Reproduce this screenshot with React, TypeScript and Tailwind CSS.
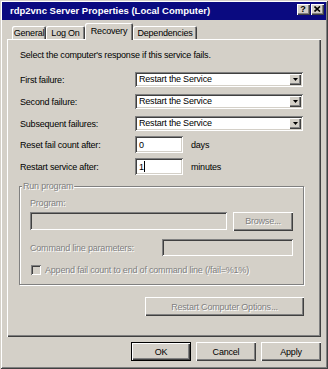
import React from "react";

const raised =
  "shadow-[inset_1px_1px_0_#ffffff,inset_-1px_-1px_0_#404040,inset_-2px_-2px_0_#808080]";
const sunken =
  "shadow-[inset_1px_1px_0_#808080,inset_-1px_-1px_0_#ffffff,inset_2px_2px_0_#404040,inset_-2px_-2px_0_#d4d0c8]";
const disabledText = "text-[#808080] [text-shadow:1px_1px_0_#ffffff]";

function Combo() {
  return (
    <div className={`h-[15px] w-[168px] bg-white ${sunken} flex items-center pl-[4px] pr-[2px]`}>
      <span className="flex-1 leading-[11px]">Restart the Service</span>
      <div className={`w-[12px] h-[11px] bg-[#d4d0c8] ${raised} flex items-center justify-center`}>
        <svg width="5" height="3" viewBox="0 0 5 3">
          <path d="M0 0h5L2.5 3z" fill="#000" />
        </svg>
      </div>
    </div>
  );
}

function Tab({ label, w, selected }: { label: string; w: string; selected?: boolean }) {
  return selected ? (
    <div
      className={`${w} h-[17px] -mb-[1px] relative z-10 bg-[#d4d0c8] rounded-t-[2px] shadow-[inset_1px_1px_0_#ffffff,inset_-1px_0_0_#404040,inset_-2px_0_0_#808080] flex items-center justify-center pb-[1px]`}
    >
      {label}
    </div>
  ) : (
    <div
      className={`${w} h-[13px] bg-[#d4d0c8] rounded-t-[2px] shadow-[inset_1px_1px_0_#ffffff,inset_-1px_0_0_#404040,inset_-2px_0_0_#808080] flex items-center justify-center`}
    >
      {label}
    </div>
  );
}

function Btn({ label, def, disabled, w }: { label: string; def?: boolean; disabled?: boolean; w: string }) {
  if (def) {
    return (
      <div className={`${w} h-[19px] border border-black`}>
        <div className={`w-full h-full ${raised} flex items-center justify-center`}>{label}</div>
      </div>
    );
  }
  return (
    <div className={`${w} h-[19px] ${raised} flex items-center justify-center ${disabled ? disabledText : ""}`}>
      {label}
    </div>
  );
}

export default function App() {
  return (
    <div className="w-[328px] h-[369px] bg-[#d4d0c8] p-[2px] flex flex-col shadow-[inset_1px_1px_0_#d4d0c8,inset_-1px_-1px_0_#404040,inset_2px_2px_0_#ffffff,inset_-2px_-2px_0_#808080] font-['Liberation_Sans',Arial,sans-serif] text-[9px] tracking-[-0.2px] text-black leading-[12px] select-none">
      {/* Title bar */}
      <div className="h-[18px] bg-[#0a0a80] flex items-start pl-[8px] pr-[2px]">
        <div className="flex-1 h-[18px] flex items-center text-white font-bold text-[9.5px] tracking-normal">
          rdp2vnc Server Properties (Local Computer)
        </div>
        <div className="flex gap-[1px] mt-[2px]">
          <div className={`w-[13px] h-[11px] bg-[#d4d0c8] ${raised} flex items-center justify-center font-bold text-[9px] leading-[9px] pr-[1px]`}>
            ?
          </div>
          <div className={`w-[13px] h-[11px] bg-[#d4d0c8] ${raised} flex items-center justify-center pr-[1px] pb-[1px]`}>
            <svg width="7" height="6" viewBox="0 0 7 6">
              <path d="M0.5 0.5L6 5.5M6 0.5L0.5 5.5" stroke="#000" strokeWidth="1.6" />
            </svg>
          </div>
        </div>
      </div>

      {/* Tabs + panel */}
      <div className="px-[5px] flex flex-col">
        <div className="h-[19px] flex items-end pl-[5px]">
          <Tab label="General" w="w-[34px]" />
          <Tab label="Log On" w="w-[39px]" />
          <Tab label="Recovery" w="w-[48px]" selected />
          <Tab label="Dependencies" w="w-[64px]" />
        </div>
        <div className={`h-[298px] ${raised} pl-[12px] pt-[10px] flex flex-col`}>
          <div className="pl-[1px] h-[12px]">Select the computer's response if this service fails.</div>

          <div className="mt-[11px] flex flex-col gap-[7px]">
            <div className="flex items-center h-[15px]">
              <div className="w-[116px] pl-[1px]">First failure:</div>
              <Combo />
            </div>
            <div className="flex items-center h-[15px]">
              <div className="w-[116px] pl-[1px]">Second failure:</div>
              <Combo />
            </div>
            <div className="flex items-center h-[15px]">
              <div className="w-[116px] pl-[1px]">Subsequent failures:</div>
              <Combo />
            </div>
          </div>

          <div className="mt-[5px] flex flex-col gap-[5px]">
            <div className="flex items-center h-[17px]">
              <div className="w-[116px] pl-[1px]">Reset fail count after:</div>
              <div className={`w-[48px] h-[17px] bg-white ${sunken} flex items-center pl-[4px]`}>0</div>
              <div className="ml-[8px]">days</div>
            </div>
            <div className="flex items-center h-[17px]">
              <div className="w-[116px] pl-[1px]">Restart service after:</div>
              <div className={`w-[48px] h-[17px] bg-white ${sunken} flex items-center pl-[4px]`}>
                <span>1</span>
                <span className="w-[1px] h-[11px] bg-black ml-[0.5px]" />
              </div>
              <div className="ml-[8px]">minutes</div>
            </div>
          </div>

          <fieldset className="mt-[5px] w-[285px] border border-[#808080] shadow-[inset_1px_1px_0_#ffffff,1px_1px_0_#ffffff]">
            <legend className={`ml-[2px] px-[1px] bg-[#d4d0c8] leading-[12px] ${disabledText}`}>Run program</legend>
            <div className="px-[10px] pt-[5px] pb-[9px] flex flex-col">
              <div className={`h-[12px] ${disabledText}`}>Program:</div>
              <div className="mt-[3px] flex items-center justify-between h-[18px]">
                <div className={`w-[197px] h-[18px] bg-[#d4d0c8] ${sunken}`} />
                <Btn label="Browse..." disabled w="w-[60px]" />
              </div>
              <div className="mt-[9px] flex items-center justify-between h-[17px]">
                <div className={disabledText}>Command line parameters:</div>
                <div className={`w-[131px] h-[17px] bg-[#d4d0c8] ${sunken}`} />
              </div>
              <div className="mt-[8px] flex items-center h-[11px]">
                <div className={`w-[10px] h-[10px] ml-[1px] bg-[#d4d0c8] ${sunken}`} />
                <div className={`ml-[4px] ${disabledText}`}>Append fail count to end of command line (/fail=%1%)</div>
              </div>
            </div>
          </fieldset>

          <div className="mt-[12px] w-[285px] flex justify-end">
            <Btn label="Restart Computer Options..." disabled w="w-[159px]" />
          </div>
        </div>
      </div>

      {/* Bottom buttons */}
      <div className="mt-[5px] pr-[5px] flex justify-end gap-[5px]">
        <Btn label="OK" def w="w-[60px]" />
        <Btn label="Cancel" w="w-[60px]" />
        <Btn label="Apply" w="w-[60px]" />
      </div>
    </div>
  );
}
